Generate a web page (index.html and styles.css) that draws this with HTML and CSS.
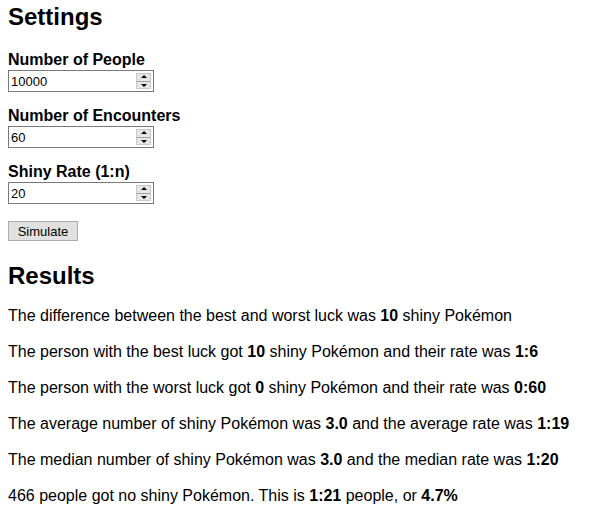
FILE: index.html
```html
<!DOCTYPE html>
<html>
<head>
<meta charset="utf-8">
<link rel="stylesheet" href="styles.css">
</head>
<body>
<h2 class="title first">Settings</h2>
<div class="field">
  <label class="label">Number of People</label>
  <div class="num"><input class="num-input" type="text" value="10000"><span class="spin"><span class="spin-btn up"></span><span class="spin-btn down"></span></span></div>
</div>
<div class="field">
  <label class="label">Number of Encounters</label>
  <div class="num"><input class="num-input" type="text" value="60"><span class="spin"><span class="spin-btn up"></span><span class="spin-btn down"></span></span></div>
</div>
<div class="field">
  <label class="label">Shiny Rate (1:n)</label>
  <div class="num"><input class="num-input" type="text" value="20"><span class="spin"><span class="spin-btn up"></span><span class="spin-btn down"></span></span></div>
</div>
<button class="btn">Simulate</button>
<h2 class="title results">Results</h2>
<p class="line">The difference between the best and worst luck was <b>10</b> shiny Pokémon</p>
<p class="line">The person with the best luck got <b>10</b> shiny Pokémon and their rate was <b>1:6</b></p>
<p class="line">The person with the worst luck got <b>0</b> shiny Pokémon and their rate was <b>0:60</b></p>
<p class="line">The average number of shiny Pokémon was <b>3.0</b> and the average rate was <b>1:19</b></p>
<p class="line">The median number of shiny Pokémon was <b>3.0</b> and the median rate was <b>1:20</b></p>
<p class="line">466 people got no shiny Pokémon. This is <b>1:21</b> people, or <b>4.7%</b></p>
</body>
</html>
```
FILE: styles.css
```css
html, body {
  margin: 0;
  background: #fff;
}
body {
  padding: 0 8px;
  font-family: "Liberation Sans", Arial, sans-serif;
  color: #000;
}
.title {
  font-size: 24px;
  line-height: 28px;
  font-weight: bold;
  margin: 0;
}
.first {
  padding-top: 3px;
}
.field {
  display: flex;
  flex-direction: column;
  align-items: flex-start;
  margin-top: 15px;
}
.field:first-of-type {
  margin-top: 20px;
}
.label {
  font-size: 16px;
  line-height: 18px;
  font-weight: bold;
  margin-bottom: 1px;
}
.num {
  box-sizing: border-box;
  width: 146px;
  height: 22px;
  border: 1px solid #7a7a7a;
  display: flex;
  align-items: center;
  background: #fff;
}
.num-input {
  border: 0;
  outline: 0;
  padding: 0 0 0 2px;
  margin: 0;
  width: 0;
  flex: 1;
  font-family: "Liberation Sans", Arial, sans-serif;
  font-size: 13px;
  color: #000;
  background: transparent;
}
.spin {
  width: 15px;
  height: 16px;
  margin-right: 2px;
  display: flex;
  flex-direction: column;
}
.spin-btn {
  flex: 1;
  background: #e6e6e6;
  border: 1px solid #c9c9c9;
  position: relative;
}
.spin-btn.up {
  border-bottom-color: #a0a0a0;
}
.spin-btn.down {
  border-top: 0;
}
.spin-btn::after {
  content: "";
  position: absolute;
  left: 50%;
  top: 50%;
  margin-left: -3px;
  border-left: 3px solid transparent;
  border-right: 3px solid transparent;
}
.spin-btn.up::after {
  margin-top: -2px;
  border-bottom: 3px solid #000;
}
.spin-btn.down::after {
  margin-top: -1px;
  border-top: 3px solid #000;
}
.btn {
  display: block;
  margin: 17px 0 0;
  box-sizing: border-box;
  width: 70px;
  height: 20px;
  padding: 0;
  font-family: "Liberation Sans", Arial, sans-serif;
  font-size: 13px;
  color: #000;
  background: #e1e1e1;
  border: 1px solid #adadad;
  border-radius: 0;
}
.results {
  margin-top: 21px;
  margin-bottom: 5px;
}
.line {
  font-size: 16px;
  line-height: 20px;
  margin: 16px 0 0;
}
```
